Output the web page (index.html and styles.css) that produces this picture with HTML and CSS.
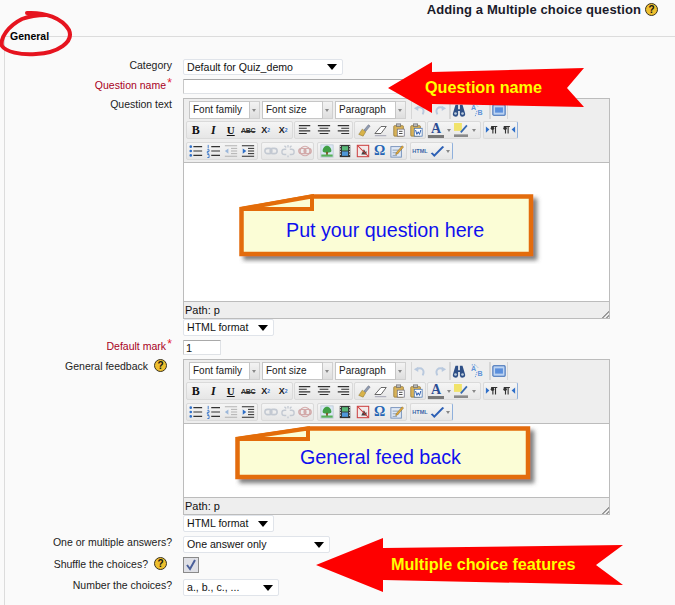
FILE: index.html
```html
<!DOCTYPE html>
<html lang="en">
<head>
<meta charset="utf-8">
<title>Adding a Multiple choice question</title>
<link rel="stylesheet" href="styles.css">
</head>
<body>
<svg class="defs" width="0" height="0" aria-hidden="true">
  <defs>
    <filter id="soft" x="-10%" y="-15%" width="125%" height="140%"><feDropShadow dx="4" dy="4" stdDeviation="2" flood-color="#555" flood-opacity=".75"/></filter>
    <symbol id="al" viewBox="0 0 16 16"><path d="M1 3h13M1 6h9M1 9h13M1 12h9" stroke="#333" stroke-width="1.2"/></symbol>
    <symbol id="ac" viewBox="0 0 16 16"><path d="M1 3h14M3 6h10M1 9h14M3 12h10" stroke="#333" stroke-width="1.2"/></symbol>
    <symbol id="ar" viewBox="0 0 16 16"><path d="M2 3h13M6 6h9M2 9h13M6 12h9" stroke="#333" stroke-width="1.2"/></symbol>
    <symbol id="brush" viewBox="0 0 16 16"><path d="M2 13l4-6 4 3-3 5z" fill="#d8b34a" stroke="#8a7430" stroke-width=".6"/><path d="M8 8l5-6 2 1.500-5 6z" fill="#8f9db3" stroke="#556" stroke-width=".5"/></symbol>
    <symbol id="eraser" viewBox="0 0 16 16"><path d="M1 12l7-8h6l-6 8z" fill="#fff" stroke="#555"/><path d="M1 14.500h13" stroke="#99a" /></symbol>
    <symbol id="paste" viewBox="0 0 16 16"><rect x="2" y="3" width="11" height="12" rx="1" fill="#d8b35a" stroke="#8c6e2a" stroke-width=".8"/><rect x="5" y="1" width="5" height="3" fill="#bbb" stroke="#555" stroke-width=".6"/><rect x="6" y="7" width="8" height="8" fill="#fff" stroke="#667" stroke-width=".8"/><path d="M8 9.500h4M8 12h4" stroke="#333"/></symbol>
    <symbol id="pasteword" viewBox="0 0 16 16"><rect x="2" y="3" width="11" height="12" rx="1" fill="#d8b35a" stroke="#8c6e2a" stroke-width=".8"/><rect x="5" y="1" width="5" height="3" fill="#bbb" stroke="#555" stroke-width=".6"/><rect x="6" y="6" width="9" height="9" fill="#fff" stroke="#36a" stroke-width=".8"/><path d="M7.500 8l1.500 5 1.500-3 1.500 3 1.500-5" fill="none" stroke="#25a" stroke-width="1.100"/></symbol>
    <symbol id="bul" viewBox="0 0 16 16"><path d="M2 3v.01M2 8v.01M2 13v.01" stroke="#2f6fc8" stroke-width="3" stroke-linecap="round"/><path d="M5 3h10M5 8h10M5 13h10" stroke="#333" stroke-width="1.200"/></symbol>
    <symbol id="num" viewBox="0 0 16 16"><path d="M2.500 1v4M1.500 6.500h2v2h-2v2h2M1.500 12h2v3.500h-2" fill="none" stroke="#2f6fc8" stroke-width="1"/><path d="M6 3h10M6 8h10M6 13h10" stroke="#333" stroke-width="1.200"/></symbol>
    <symbol id="out" viewBox="0 0 16 16"><path d="M1 2h14M8 5h7M8 8h7M8 11h7M1 14h14" stroke="#aaa"/><path d="M1 8l4-3v6z" fill="#9db8da"/></symbol>
    <symbol id="ind" viewBox="0 0 16 16"><path d="M1 2h14M8 5h7M8 8h7M8 11h7M1 14h14" stroke="#222" stroke-width="1.100"/><path d="M6 8l-4-3v6z" fill="#2f6fc8"/></symbol>
    <symbol id="link" viewBox="0 0 16 16"><g fill="none" stroke="#c3c9d2" stroke-width="1.800"><rect x="1" y="5" width="8" height="6" rx="3"/><rect x="7" y="5" width="8" height="6" rx="3"/></g></symbol>
    <symbol id="unlink" viewBox="0 0 16 16"><g fill="none" stroke="#c3c9d2" stroke-width="1.500"><path d="M6 6H4a2.500 2.500 0 0 0 0 6h2M10 6h2a2.500 2.500 0 0 1 0 6h-2"/><path d="M8 1v3M4 2l2 2M12 2l-2 2M8 13v2"/></g></symbol>
    <symbol id="anchor" viewBox="0 0 16 16"><g fill="none" stroke="#d2a9a9" stroke-width="1.700"><rect x="1" y="5" width="8" height="6" rx="3"/><rect x="7" y="5" width="8" height="6" rx="3"/><circle cx="8" cy="8" r="5.500" stroke-width="1.200"/></g></symbol>
    <symbol id="img" viewBox="0 0 16 16"><rect x="1" y="1" width="14" height="14" fill="#dbe8f5" stroke="#b5c2cf" stroke-width=".8"/><path d="M8 2c3 0 5 3 5 6 0 1-2 2-5 2s-5-1-5-2c0-3 2-6 5-6z" fill="#3f9f45"/><rect x="7" y="9" width="2" height="4" fill="#7a5020"/><rect x="1.500" y="12" width="13" height="2.500" fill="#58b05a"/></symbol>
    <symbol id="media" viewBox="0 0 16 16"><rect x="2" y="1" width="12" height="14" fill="#333"/><path d="M2.800 2v12M13.200 2v12" stroke="#eee" stroke-width="1" stroke-dasharray="1.500 1.500"/><rect x="4.500" y="2.500" width="7" height="5" fill="#58b878"/><rect x="4.500" y="8.500" width="7" height="5" fill="#4f98d8"/></symbol>
    <symbol id="nb" viewBox="0 0 16 16"><rect x="1.500" y="1.500" width="13" height="13" fill="#f3eaea" stroke="#c44" stroke-width="1.200"/><path d="M6 12l3-6 2 3 1-1v4z" fill="#444"/><path d="M2 2l12 12" stroke="#c33" stroke-width="1.200"/></symbol>
    <symbol id="edit" viewBox="0 0 16 16"><rect x="1" y="3" width="12" height="12" fill="#dfe8f5" stroke="#6f8cb8"/><path d="M3 7h7M3 10h7M3 13h5" stroke="#89a"/><path d="M7 10l7-8 1.500 1.500-7 8-2 .5z" fill="#e0a83a" stroke="#7a5a18" stroke-width=".5"/></symbol>
    <symbol id="spell" viewBox="0 0 20 16"><path d="M3 10l4 4 11-11-2-1-9 9-2-2z" fill="#2c5fb5"/></symbol>
    <symbol id="undo" viewBox="0 0 16 16"><path d="M4 6c6-3 10 1 7 7" fill="none" stroke="#b9c9de" stroke-width="2.200"/><path d="M1 6l5-3v6z" fill="#b9c9de"/></symbol>
    <symbol id="redo" viewBox="0 0 16 16"><path d="M12 6c-6-3-10 1-7 7" fill="none" stroke="#b9c9de" stroke-width="2.200"/><path d="M15 6l-5-3v6z" fill="#b9c9de"/></symbol>
    <symbol id="find" viewBox="0 0 16 16"><path d="M4 2h3v5h2V2h3l3 10a3 3 0 0 1-6 1V9H7v4a3 3 0 0 1-6-1z" fill="#2e4f86"/><circle cx="4" cy="12" r="1.500" fill="#bcd"/><circle cx="12" cy="12" r="1.500" fill="#bcd"/></symbol>
    <symbol id="repl" viewBox="0 0 16 16"><path d="M2 1h4l3 3M8 9l-2 6" fill="none" stroke="#5f93d8" stroke-dasharray="1.500 1"/><text x="8.500" y="14" class="tiny-b">B</text><text x="1" y="8" class="tiny-a">A</text></symbol>
    <symbol id="full" viewBox="0 0 16 16"><rect x="1" y="2" width="14" height="12" rx="1" fill="#bcd3f2" stroke="#3769b5" stroke-width="1.200"/><rect x="3.500" y="5" width="9" height="6" fill="#5b8fdc"/></symbol>
    <symbol id="ltr" viewBox="0 0 16 16"><path d="M1 4l4 3.500-4 3.500z" fill="#2f6fc8"/><path d="M7 4h7M9 4v8M12 4v8" stroke="#333" stroke-width="1.300"/><circle cx="8.500" cy="6" r="2" fill="#333"/></symbol>
    <symbol id="rtl" viewBox="0 0 16 16"><path d="M15 4l-4 3.500 4 3.500z" fill="#2f6fc8"/><path d="M2 4h7M4 4v8M7 4v8" stroke="#333" stroke-width="1.300"/><circle cx="3.500" cy="6" r="2" fill="#333"/></symbol>
    <symbol id="hl" viewBox="0 0 16 16"><rect x="0" y="0" width="9" height="9" fill="#f1e36a"/><path d="M7 10l7-8 1.500 1.500-7 8z" fill="#3568b0"/><rect x="0" y="13" width="16" height="3" fill="#8a8a8a"/></symbol>
  </defs>
</svg>

<header class="page-head">
  <h1 class="page-title">Adding a Multiple choice question</h1>
  <span class="help">?</span>
</header>

<form class="question-form">
  <fieldset class="general">
    <legend class="general-legend">General</legend>

    <div class="row row-category">
      <label class="lbl">Category</label>
      <div class="select select-category"><span>Default for Quiz_demo</span><i class="tri"></i></div>
    </div>

    <div class="row row-gap">
      <label class="lbl req">Question name<em>*</em></label>
      <input class="text-input name-input" type="text">
    </div>

    <div class="row row-gap">
      <label class="lbl">Question text</label>
      <div class="control-stack">
        <div class="editor">
          <div class="toolbar">
            <div class="tb-row">
              <div class="combo combo-first"><span>Font family</span><b></b></div>
              <div class="combo"><span>Font size</span><b></b></div>
              <div class="combo"><span>Paragraph</span><b></b></div>
              <div class="group plain g-undo"><svg class="ic"><use href="#undo"/></svg><svg class="ic"><use href="#redo"/></svg></div>
              <div class="group plain g-find"><svg class="ic"><use href="#find"/></svg><svg class="ic"><use href="#repl"/></svg></div>
              <div class="group plain g-full"><svg class="ic"><use href="#full"/></svg></div>
            </div>
            <div class="tb-row tb-row2">
              <div class="group"><span class="btn w17h b-b">B</span><span class="btn w17h b-i">I</span><span class="btn w17h b-u">U</span><span class="btn w17h b-abc">ABC</span><span class="btn w17h b-x">X<sub>2</sub></span><span class="btn w17h b-x">X<sup>2</sup></span></div>
              <div class="group"><span class="btn w19"><svg class="ic"><use href="#al"/></svg></span><span class="btn w19"><svg class="ic"><use href="#ac"/></svg></span><span class="btn w19"><svg class="ic"><use href="#ar"/></svg></span></div>
              <div class="group"><span class="btn w17h"><svg class="ic"><use href="#brush"/></svg></span><span class="btn w17h"><svg class="ic"><use href="#eraser"/></svg></span><span class="btn w17h"><svg class="ic"><use href="#paste"/></svg></span><span class="btn w17h"><svg class="ic"><use href="#pasteword"/></svg></span></div>
              <div class="group"><span class="btn w16 b-a">A</span><span class="btn w10"><i class="mini"></i></span><span class="btn w14"><svg class="ic"><use href="#hl"/></svg></span><span class="btn w12"><i class="mini"></i></span></div>
              <div class="group g-end g-m2"><span class="btn w16h"><svg class="ic"><use href="#ltr"/></svg></span><span class="btn w16h"><svg class="ic"><use href="#rtl"/></svg></span></div>
            </div>
            <div class="tb-row tb-row3">
              <div class="group"><span class="btn w17h"><svg class="ic"><use href="#bul"/></svg></span><span class="btn w17h"><svg class="ic"><use href="#num"/></svg></span><span class="btn w17h"><svg class="ic"><use href="#out"/></svg></span><span class="btn w17h"><svg class="ic"><use href="#ind"/></svg></span></div>
              <div class="group g-m3"><span class="btn w17"><svg class="ic"><use href="#link"/></svg></span><span class="btn w17"><svg class="ic"><use href="#unlink"/></svg></span><span class="btn w17"><svg class="ic"><use href="#anchor"/></svg></span></div>
              <div class="group g-m3"><span class="btn"><svg class="ic"><use href="#img"/></svg></span><span class="btn"><svg class="ic"><use href="#media"/></svg></span><span class="btn w17"><svg class="ic"><use href="#nb"/></svg></span><span class="btn b-om w17">Ω</span><span class="btn"><svg class="ic"><use href="#edit"/></svg></span></div>
              <div class="group g-end g-m3"><span class="btn b-html">HTML</span><span class="btn w15"><svg class="ic ic-spell"><use href="#spell"/></svg></span><span class="btn w8"><i class="mini"></i></span></div>
            </div>
          </div>
          <div class="edit-area edit-tall"></div>
          <div class="status">Path: p<i class="grip"></i></div>
        </div>
        <div class="select select-format"><span>HTML format</span><i class="tri"></i></div>
      </div>
    </div>

    <div class="row row-gap">
      <label class="lbl req">Default mark<em>*</em></label>
      <input class="text-input mark-input" type="text" value="1">
    </div>

    <div class="row row-gap">
      <label class="lbl lbl-help">General feedback<span class="help">?</span></label>
      <div class="control-stack">
        <div class="editor">
          <div class="toolbar">
            <div class="tb-row">
              <div class="combo combo-first"><span>Font family</span><b></b></div>
              <div class="combo"><span>Font size</span><b></b></div>
              <div class="combo"><span>Paragraph</span><b></b></div>
              <div class="group plain g-undo"><svg class="ic"><use href="#undo"/></svg><svg class="ic"><use href="#redo"/></svg></div>
              <div class="group plain g-find"><svg class="ic"><use href="#find"/></svg><svg class="ic"><use href="#repl"/></svg></div>
              <div class="group plain g-full"><svg class="ic"><use href="#full"/></svg></div>
            </div>
            <div class="tb-row tb-row2">
              <div class="group"><span class="btn w17h b-b">B</span><span class="btn w17h b-i">I</span><span class="btn w17h b-u">U</span><span class="btn w17h b-abc">ABC</span><span class="btn w17h b-x">X<sub>2</sub></span><span class="btn w17h b-x">X<sup>2</sup></span></div>
              <div class="group"><span class="btn w19"><svg class="ic"><use href="#al"/></svg></span><span class="btn w19"><svg class="ic"><use href="#ac"/></svg></span><span class="btn w19"><svg class="ic"><use href="#ar"/></svg></span></div>
              <div class="group"><span class="btn w17h"><svg class="ic"><use href="#brush"/></svg></span><span class="btn w17h"><svg class="ic"><use href="#eraser"/></svg></span><span class="btn w17h"><svg class="ic"><use href="#paste"/></svg></span><span class="btn w17h"><svg class="ic"><use href="#pasteword"/></svg></span></div>
              <div class="group"><span class="btn w16 b-a">A</span><span class="btn w10"><i class="mini"></i></span><span class="btn w14"><svg class="ic"><use href="#hl"/></svg></span><span class="btn w12"><i class="mini"></i></span></div>
              <div class="group g-end g-m2"><span class="btn w16h"><svg class="ic"><use href="#ltr"/></svg></span><span class="btn w16h"><svg class="ic"><use href="#rtl"/></svg></span></div>
            </div>
            <div class="tb-row tb-row3">
              <div class="group"><span class="btn w17h"><svg class="ic"><use href="#bul"/></svg></span><span class="btn w17h"><svg class="ic"><use href="#num"/></svg></span><span class="btn w17h"><svg class="ic"><use href="#out"/></svg></span><span class="btn w17h"><svg class="ic"><use href="#ind"/></svg></span></div>
              <div class="group g-m3"><span class="btn w17"><svg class="ic"><use href="#link"/></svg></span><span class="btn w17"><svg class="ic"><use href="#unlink"/></svg></span><span class="btn w17"><svg class="ic"><use href="#anchor"/></svg></span></div>
              <div class="group g-m3"><span class="btn"><svg class="ic"><use href="#img"/></svg></span><span class="btn"><svg class="ic"><use href="#media"/></svg></span><span class="btn w17"><svg class="ic"><use href="#nb"/></svg></span><span class="btn b-om w17">Ω</span><span class="btn"><svg class="ic"><use href="#edit"/></svg></span></div>
              <div class="group g-end g-m3"><span class="btn b-html">HTML</span><span class="btn w15"><svg class="ic ic-spell"><use href="#spell"/></svg></span><span class="btn w8"><i class="mini"></i></span></div>
            </div>
          </div>
          <div class="edit-area edit-short"></div>
          <div class="status">Path: p<i class="grip"></i></div>
        </div>
        <div class="select select-format"><span>HTML format</span><i class="tri"></i></div>
      </div>
    </div>

    <div class="row row-gap">
      <label class="lbl">One or multiple answers?</label>
      <div class="select select-one"><span>One answer only</span><i class="tri"></i></div>
    </div>

    <div class="row row-gap">
      <label class="lbl lbl-help">Shuffle the choices?<span class="help">?</span></label>
      <div class="checkbox"><svg viewBox="0 0 14 14" width="14" height="14"><path d="M3 7l3 4 5-9" fill="none" stroke="#4a5f9a" stroke-width="2"/></svg></div>
    </div>

    <div class="row row-number">
      <label class="lbl">Number the choices?</label>
      <div class="select select-number"><span>a., b., c., ...</span><i class="tri"></i></div>
    </div>
  </fieldset>
</form>

<svg class="ring" width="76" height="60" viewBox="0 0 76 60" aria-hidden="true"><path d="M27 13C45 12 62 18 69 30 74 42 58 53 36 54 20 55 6 52 2 46 0 38 8 26 22 19 30 16 38 15 46 15" fill="none" stroke="#e6141f" stroke-width="4" stroke-linecap="round"/></svg>

<div class="arrow arrow-name">
  <svg width="200" height="55" viewBox="0 0 200 55" aria-hidden="true"><path d="M0 26 44 0V10L196 6 179 26 196 45 44 42V51Z" fill="#fe0000"/></svg>
  <span class="arrow-text">Question name</span>
</div>

<div class="callout callout-q">
  <svg width="306" height="70" viewBox="0 0 306 70" aria-hidden="true"><path d="M2.500 15 73 2.500H292V60H2.500Z" fill="#fbfdd6" stroke="#e36c09" stroke-width="4.500" filter="url(#soft)"/><path d="M2.500 15 73 2.500 73 15Z" fill="#fbfdd6" stroke="#e36c09" stroke-width="4"/></svg>
  <span class="callout-text">Put your question here</span>
</div>

<div class="callout callout-f">
  <svg width="306" height="62" viewBox="0 0 306 62" aria-hidden="true"><path d="M2.500 13 73 2.500H293V51H2.500Z" fill="#fbfdd6" stroke="#e36c09" stroke-width="4.500" filter="url(#soft)"/><path d="M2.500 13 73 2.500 73 13Z" fill="#fbfdd6" stroke="#e36c09" stroke-width="4"/></svg>
  <span class="callout-text">General feed back</span>
</div>

<div class="arrow arrow-mc">
  <svg width="310" height="56" viewBox="0 0 310 56" aria-hidden="true"><path d="M0 27 67 0V10L307 7 280 27 307 47 67 42V54Z" fill="#fe0000"/></svg>
  <span class="arrow-text">Multiple choice features</span>
</div>
</body>
</html>
```

FILE: styles.css
```css
* { box-sizing: border-box; }
html, body { margin: 0; height: 605px; overflow: hidden; }
body {
  position: relative;
  background: #fafafa;
  color: #111;
  font: 10.600px/13px "Liberation Sans", Arial, sans-serif;
}
.defs { position: absolute; }
.tiny-a, .tiny-b { font: bold 8px "Liberation Sans", sans-serif; fill: #5f93d8; }

.page-head {
  height: 30px;
  padding: 2px 17px 0 0;
  display: flex;
  justify-content: flex-end;
  align-items: flex-start;
  gap: 4px;
}
.page-title { margin: 0; font-size: 13px; line-height: 15px; font-weight: bold; color: #1a1a2a; letter-spacing: .1px; }
.help {
  width: 13px; height: 13px; flex: none;
  display: inline-flex; align-items: center; justify-content: center;
  border: 1px solid #3a3320; border-radius: 50%;
  background: #eebf2e;
  color: #111; font: bold 10px/11px "Liberation Sans", sans-serif;
}
.page-head .help { margin-top: 1px; }

.question-form { margin: 0; }
.general {
  margin: 0 0 0 4px;
  padding: 16px 0 9px 0;
  min-width: 0;
  height: 575px;
  border: solid #dcdcdc;
  border-width: 1px 0 0 1px;
}
.general-legend { margin-left: 5px; padding: 0; font-size: 10.500px; font-weight: bold; line-height: 13px; color: #000; }

.row { display: grid; grid-template-columns: 167px 1fr; column-gap: 11px; align-items: start; }
.row-gap { margin-top: 4px; }
.row-number { margin-top: 6px; }
.lbl { display: block; text-align: right; color: #222; font-size: 10.500px; line-height: 12px; }
.req { color: #a8001c; padding-right: 6px; position: relative; }
.req em { position: absolute; right: 0; top: -2px; color: #e5212d; font-style: normal; font-size: 12px; }
.lbl-help { display: flex; justify-content: flex-end; align-items: center; gap: 6px; padding-right: 5px; }

.select {
  height: 17px;
  display: flex; align-items: center; justify-content: space-between;
  padding: 0 5px 0 3px;
  background: #fff;
  border: 1px solid #e0e4ea;
  border-radius: 2px;
  color: #111;
}
.tri { width: 0; height: 0; border: 5px solid transparent; border-top: 6px solid #000; border-bottom: 0; }
.select-category { width: 160px; height: 16px; }
.select-format { width: 91px; }
.select-one { width: 147px; }
.select-number { width: 96px; }

.text-input {
  display: block; height: 15px; padding: 0 0 0 2px;
  background: #fff;
  border: 1px solid #dfe2e6; border-top-color: #a9a9a9; border-left-color: #c8c8c8;
  border-radius: 1px;
  font: 11px "Liberation Sans", sans-serif; color: #111;
}
.name-input { width: 250px; }
.mark-input { width: 38px; }

.control-stack { display: flex; flex-direction: column; align-items: flex-start; }
.editor { width: 427px; border: 1px solid #bcbcbc; background: #eee; }
.toolbar { height: 63px; padding: 2px 0 0 2px; }
.tb-row { display: flex; height: 18px; }
.tb-row2 { margin-top: 2px; }
.tb-row3 { margin-top: 3px; }
.tb-row2 .group + .group { margin-left: 1px; }
.tb-row2 .group + .g-m2 { margin-left: 2px; }

.combo { width: 71px; height: 18px; margin-left: 2px; display: flex; }
.combo-first { margin-left: 3px; }
.combo span {
  width: 61px; padding: 0 0 0 3px;
  background: #fff; border: 1px solid #c6c6c6;
  font-size: 10px; line-height: 16px; color: #222;
}
.combo b { width: 10px; position: relative; background: linear-gradient(#f3f3f3, #dedede); border: solid #d0d0d0; border-width: 1px 1px 1px 0; }
.combo b::after { content: ""; position: absolute; left: 2px; top: 7px; border: 2px solid transparent; border-top: 3px solid #888; border-bottom: 0; }

.group {
  display: flex; align-items: center; height: 18px;
  background: linear-gradient(#f5f5f5, #e6e6e6);
  border: 1px solid #dadada;
  border-radius: 2px;
}
.plain { background: #eee; border-width: 0 1px; border-color: #d6d6d6; border-radius: 0; padding: 0; }
.g-undo { width: 39px; gap: 6px; margin-left: 5px; padding-left: 1px; }
.g-find { width: 40px; gap: 4px; padding-left: 1px; }
.g-full { width: 18px; justify-content: center; }
.g-end { border-right-color: #8fb0dc; }
.g-m3 { margin-left: 3px; }

.btn { width: 18px; height: 16px; flex: none; display: flex; align-items: center; justify-content: center; }
.w20 { width: 20px; }
.w19 { width: 19px; }
.w17h { width: 17.500px; }
.w17 { width: 17px; }
.w16h { width: 16.500px; }
.w16 { width: 16px; }
.w15 { width: 15px; }
.w14 { width: 14px; }
.w12 { width: 12px; }
.w10 { width: 10px; }
.w8 { width: 8px; }
.ic { width: 14px; height: 14px; display: block; }
.ic-spell { width: 18px; height: 15px; flex: none; overflow: visible; }
.mini { border: 2px solid transparent; border-top: 3px solid #888; border-bottom: 0; }
.b-b { font: bold 12px "Liberation Serif", serif; color: #111; }
.b-i { font: italic bold 12px "Liberation Serif", serif; color: #111; }
.b-u { font: bold 11px "Liberation Serif", serif; color: #111; text-decoration: underline; }
.b-abc { font: bold 7px "Liberation Sans", sans-serif; color: #333; text-decoration: line-through; letter-spacing: -.3px; }
.b-x { font: bold 9px "Liberation Sans", sans-serif; color: #222; }
.b-x sub, .b-x sup { font-size: 5px; line-height: 0; color: #2f6fc8; }
.b-a { font: bold 14px/14px "Liberation Serif", serif; color: #2c4d94; border-bottom: 3px solid #777; height: 15px; }
.b-om { font: bold 14px "Liberation Serif", serif; color: #2565b5; }
.b-html { width: 18px; font: bold 5.500px "Liberation Sans", sans-serif; color: #3b66a8; }

.edit-area { background: #fff; border-top: 1px solid #bcbcbc; }
.edit-tall { height: 139px; }
.edit-short { height: 74px; }
.status {
  height: 17px; padding: 1px 0 0 1px;
  border-top: 1px solid #bcbcbc;
  font-size: 11px; line-height: 14px; color: #111;
  background: #eee; position: relative;
}
.grip {
  position: absolute; right: 0; bottom: 0; width: 9px; height: 9px;
  background: repeating-linear-gradient(135deg, transparent 0 1.500px, #999 1.500px 3px);
  clip-path: polygon(100% 0, 100% 100%, 0 100%);
}

.checkbox {
  width: 16px; height: 16px; padding: 0;
  display: flex; align-items: center; justify-content: center;
  background: #dfe0e6; border: 1px solid #8a8a8a;
}

.ring { position: absolute; left: 0; top: 0; }
.arrow, .callout { position: absolute; }
.arrow svg, .callout svg { display: block; }
.arrow-name { left: 388px; top: 62px; }
.arrow-mc { left: 316px; top: 538px; }
.arrow-text { position: absolute; top: 0; color: #ffff00; font-size: 16.200px; font-weight: bold; white-space: nowrap; }
.arrow-name .arrow-text { left: 37px; top: 16px; line-height: 18px; }
.arrow-mc .arrow-text { left: 75px; top: 17px; line-height: 18px; }
.callout-q { left: 239px; top: 194px; }
.callout-f { left: 235px; top: 426px; }
.callout-text { position: absolute; color: #0f0fee; font-size: 19.700px; line-height: 24px; white-space: nowrap; }
.callout-q .callout-text { left: 47px; top: 24px; }
.callout-f .callout-text { left: 65px; top: 19px; }
```
